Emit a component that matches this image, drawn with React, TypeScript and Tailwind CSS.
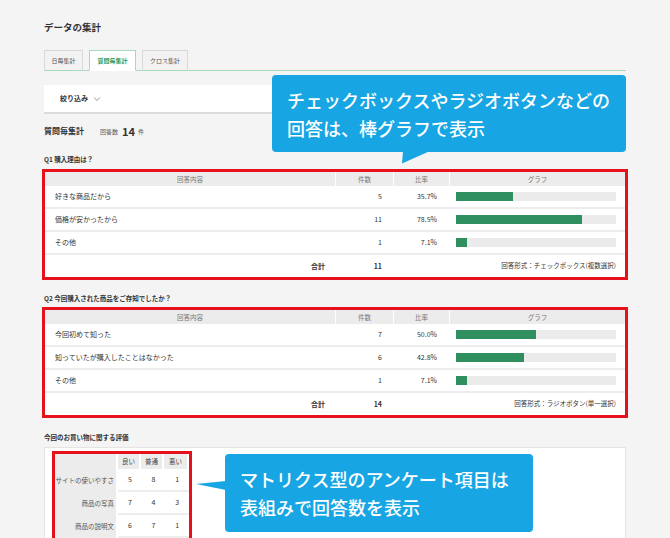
import React from "react";

type Row = { label: string; count: number; ratio: string; pct: number };

const q1: Row[] = [
  { label: "好きな商品だから", count: 5, ratio: "35.7%", pct: 35.7 },
  { label: "価格が安かったから", count: 11, ratio: "78.5%", pct: 78.5 },
  { label: "その他", count: 1, ratio: "7.1%", pct: 7.1 },
];

const q2: Row[] = [
  { label: "今回初めて知った", count: 7, ratio: "50.0%", pct: 50 },
  { label: "知っていたが購入したことはなかった", count: 6, ratio: "42.8%", pct: 42.8 },
  { label: "その他", count: 1, ratio: "7.1%", pct: 7.1 },
];

const matrix = [
  { label: "サイトの使いやすさ", values: [5, 8, 1] },
  { label: "商品の写真", values: [7, 4, 3] },
  { label: "商品の説明文", values: [6, 7, 1] },
];

function ResultTable(props: { rows: Row[]; total: number; kind: string }) {
  return (
    <div className="-mx-[2px] border-[3px] border-[#e5121b] bg-white">
      <div className="grid h-[14px] grid-cols-[290px_57px_55px_1fr] gap-x-px bg-white text-[6.5px] leading-[14px] text-[#777]">
        <div className="bg-[#ececec] text-center">回答内容</div>
        <div className="bg-[#ececec] text-center">件数</div>
        <div className="bg-[#ececec] text-center">比率</div>
        <div className="bg-[#ececec] text-center">グラフ</div>
      </div>
      {props.rows.map((row) => (
        <div
          key={row.label}
          className="grid h-[23px] grid-cols-[290px_57px_55px_1fr] items-center border-b-2 border-[#ededed] text-[7px] text-[#333]"
        >
          <div className="pl-[10px]">{row.label}</div>
          <div className="pr-[10px] text-right">{row.count}</div>
          <div className="pr-[10px] text-right">{row.ratio}</div>
          <div className="px-[9px]">
            <div className="h-[9px] bg-[#ebebeb]">
              <div className="h-full bg-[#2f8f5f]" style={{ width: `${row.pct}%` }} />
            </div>
          </div>
        </div>
      ))}
      <div className="grid h-[22px] grid-cols-[290px_57px_1fr] items-center text-[7px] text-[#333]">
        <div className="pr-[10px] text-right font-bold">合計</div>
        <div className="pr-[10px] text-right font-bold">{props.total}</div>
        <div className="pr-[9px] text-right text-[6.5px]">回答形式：{props.kind}</div>
      </div>
    </div>
  );
}

export default function App() {
  return (
    <div
      className="relative h-[538px] w-[670px] overflow-hidden bg-[#f4f4f4] px-[44px] pt-[20px]"
      style={{ fontFamily: '"Noto Sans CJK JP", "Noto Sans", sans-serif' }}
    >
      <h1 className="h-[14px] text-[9.5px] font-bold leading-[14px] text-[#333]">データの集計</h1>

      <div className="mt-[16px] flex h-[21px] items-end gap-[6px] border-b border-[#a9d9bd]">
        <div className="-mb-px flex h-[21px] w-[39px] items-center justify-center border border-[#d9d9d9] border-b-[#a9d9bd] bg-[#f2f2f2] text-[6px] text-[#555]">
          日毎集計
        </div>
        <div className="-mb-px flex h-[21px] w-[47px] items-center justify-center border border-[#a9d9bd] border-b-white bg-white text-[6px] font-bold text-[#2e9a5a]">
          質問毎集計
        </div>
        <div className="-mb-px flex h-[21px] w-[46px] items-center justify-center border border-[#d9d9d9] border-b-[#a9d9bd] bg-[#f2f2f2] text-[6px] text-[#555]">
          クロス集計
        </div>
      </div>

      <div className="mt-[14px] flex h-[27px] items-center gap-[5px] bg-white pl-[16px] shadow-[0_2px_0_#dcdcdc]">
        <span className="text-[7px] font-bold text-[#333]">絞り込み</span>
        <svg width="8" height="6" viewBox="0 0 8 6" className="mt-px">
          <path d="M1 1.5 L4 4.5 L7 1.5" fill="none" stroke="#888" strokeWidth="0.9" />
        </svg>
      </div>

      <div className="mt-[12px] flex h-[14px] items-center text-[#333]">
        <span className="text-[8px] font-bold">質問毎集計</span>
        <span className="ml-[16px] text-[6px] text-[#555]">回答数</span>
        <span className="ml-[4px] text-[11px] font-bold">14</span>
        <span className="ml-[3px] text-[6px] text-[#555]">件</span>
      </div>

      <div className="mt-[16px] h-[10px] text-[6.5px] font-bold leading-[10px] text-[#333]">Q1 購入理由は？</div>
      <div className="mt-[5px]">
        <ResultTable rows={q1} total={11} kind="チェックボックス(複数選択)" />
      </div>

      <div className="mt-[13px] h-[10px] text-[6.5px] font-bold leading-[10px] text-[#333]">
        Q2 今回購入された商品をご存知でしたか？
      </div>
      <div className="mt-[4px]">
        <ResultTable rows={q2} total={14} kind="ラジオボタン(単一選択)" />
      </div>

      <div className="mt-[14px] h-[10px] text-[6.5px] font-bold leading-[10px] text-[#333]">今回のお買い物に関する評価</div>
      <div className="mt-[5px] h-[120px] border border-[#e4e4e4] bg-white pl-[7px] pt-[3px]">
        <div className="w-[140px] border-[3px] border-[#e5121b] bg-white text-[6.5px]">
          <div className="flex h-[15px]">
            <div className="w-[61px] bg-[#ececec]" />
            <div className="ml-[2px] flex w-[21px] items-center justify-center bg-[#ececec] text-[#444]">良い</div>
            <div className="ml-[2px] flex w-[21px] items-center justify-center bg-[#ececec] text-[#444]">普通</div>
            <div className="ml-[2px] flex w-[23px] items-center justify-center bg-[#ececec] text-[#444]">悪い</div>
          </div>
          {matrix.map((m) => (
            <div key={m.label} className="flex h-[23px]">
              <div className="flex w-[61px] items-center justify-end bg-[#ececec] pr-[2px] text-[#555]">{m.label}</div>
              <div className="ml-[2px] flex flex-1 border-b-2 border-[#ededed] text-[7px] text-[#333]">
                {m.values.map((v, i) => (
                  <div key={i} className="flex flex-1 items-center justify-center">
                    {v}
                  </div>
                ))}
              </div>
            </div>
          ))}
        </div>
      </div>

      <div className="absolute left-[272px] top-[75px] flex h-[77px] w-[354px] flex-col justify-center rounded-[4px] bg-[#17a6e3] pl-[15px] text-[18px] font-medium leading-[28px] text-white">
        <div>チェックボックスやラジオボタンなどの</div>
        <div>回答は、棒グラフで表示</div>
        <svg className="absolute left-[130px] top-[76px]" width="29" height="13" viewBox="0 0 29 13">
          <path d="M1 0 L0 12.5 L28 0 Z" fill="#17a6e3" />
        </svg>
      </div>

      <div className="absolute left-[225px] top-[454px] flex h-[78px] w-[308px] flex-col justify-center rounded-[4px] bg-[#17a6e3] pl-[15px] text-[18px] font-medium leading-[28px] text-white">
        <div>マトリクス型のアンケート項目は</div>
        <div>表組みで回答数を表示</div>
        <svg className="absolute -left-[29px] top-[26px]" width="30" height="12" viewBox="0 0 30 12">
          <path d="M30 1 L0 4 L30 10 Z" fill="#17a6e3" />
        </svg>
      </div>
    </div>
  );
}
